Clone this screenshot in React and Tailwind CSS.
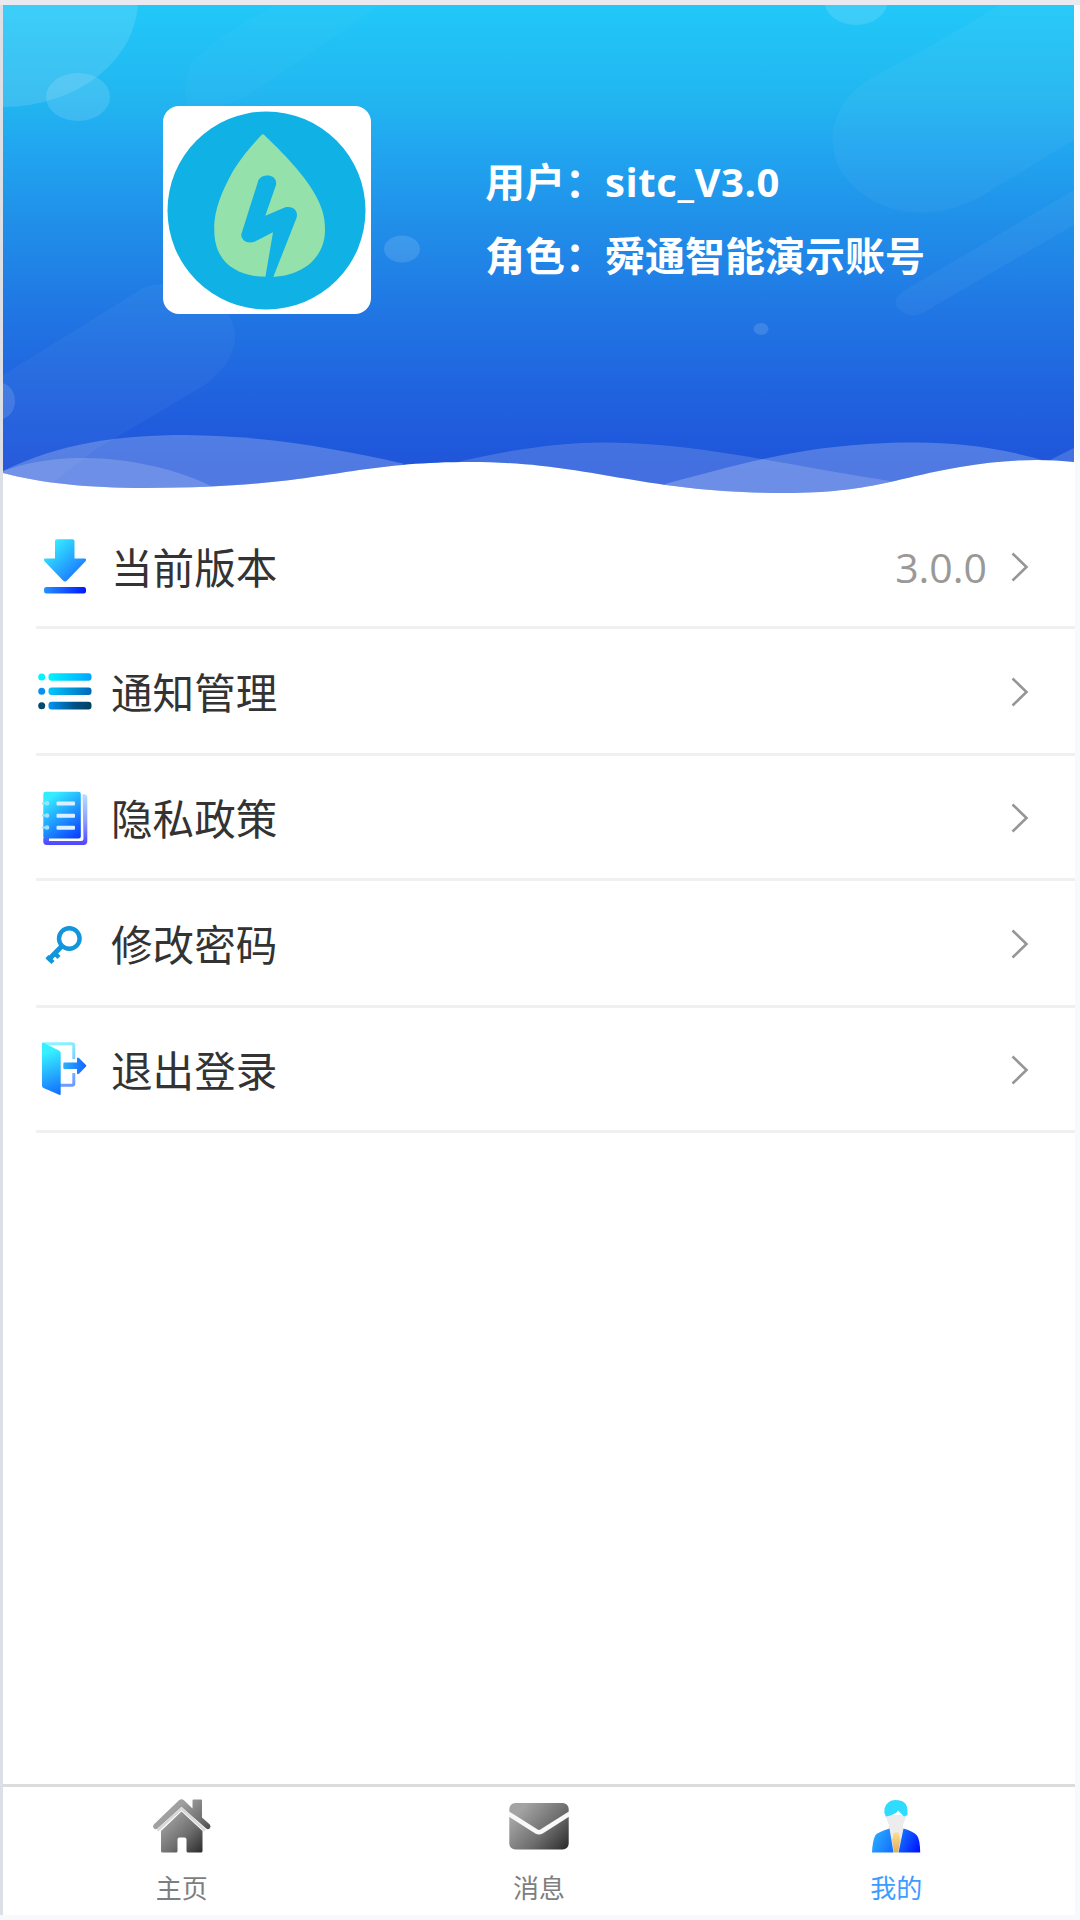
import React, { useState } from "react";

/* ================= ICONS ================= */
const DownloadIcon = () => (
  <svg width="54" height="56" viewBox="0 0 54 56">
    <defs>
      <linearGradient id="dl" x1="6" y1="0" x2="50" y2="46" gradientUnits="userSpaceOnUse">
        <stop offset="0.1" stopColor="#37f2ff" />
        <stop offset="0.75" stopColor="#1b7fff" />
        <stop offset="1" stopColor="#0a30ff" />
      </linearGradient>
      <linearGradient id="dlBar" x1="6" y1="0" x2="48" y2="0" gradientUnits="userSpaceOnUse">
        <stop stopColor="#2493ff" />
        <stop offset="1" stopColor="#0018ff" />
      </linearGradient>
    </defs>
    <path
      d="M19 .3h15.500a2 2 0 0 1 2 2V19.500H46.500q2.500 .4 1 2.700L29 41.500q-2 1.800-4 0L6.500 22.200q-1.500-2.300 1-2.700H17V2.300a2 2 0 0 1 2-2z"
      fill="url(#dl)"
    />
    <rect x="6" y="48" width="42" height="6.600" rx="2.500" fill="url(#dlBar)" />
  </svg>
);

const ListIcon = () => (
  <svg width="54" height="56" viewBox="0 0 54 56">
    <defs>
      <linearGradient id="l1">
        <stop stopColor="#00f5ff" />
        <stop offset="1" stopColor="#00a5ff" />
      </linearGradient>
      <linearGradient id="l2">
        <stop stopColor="#00c8ff" />
        <stop offset="1" stopColor="#0068b8" />
      </linearGradient>
      <linearGradient id="l3">
        <stop stopColor="#0095f5" />
        <stop offset="0.6" stopColor="#005288" />
        <stop offset="1" stopColor="#003f60" />
      </linearGradient>
    </defs>
    <circle cx="3.700" cy="13" r="3.500" fill="#00f5ff" />
    <circle cx="3.700" cy="27.300" r="3.500" fill="#0a92ea" />
    <circle cx="3.700" cy="41.700" r="3.500" fill="#03496e" />
    <rect x="10.500" y="9.200" width="43" height="7.600" rx="3" fill="url(#l1)" />
    <rect x="10.500" y="23.500" width="43" height="7.600" rx="3" fill="url(#l2)" />
    <rect x="10.500" y="37.800" width="43" height="7.600" rx="3" fill="url(#l3)" />
  </svg>
);

const PolicyIcon = () => (
  <svg width="54" height="56" viewBox="0 0 54 56">
    <defs>
      <linearGradient id="bk" x1="8" y1="3" x2="42" y2="50" gradientUnits="userSpaceOnUse">
        <stop offset="0.1" stopColor="#33edff" />
        <stop offset="0.95" stopColor="#0b3dff" />
      </linearGradient>
      <linearGradient id="bkBack" x1="40" y1="2" x2="40" y2="55" gradientUnits="userSpaceOnUse">
        <stop stopColor="#b9e6ff" />
        <stop offset="0.55" stopColor="#8f9cff" />
        <stop offset="1" stopColor="#4b45ff" />
      </linearGradient>
    </defs>
    <path
      d="M44.500 4q4.800 .3 4.800 3v44q0 4-4 4H9q-3.700 0-3.700-3.500V48H11V51H43q2.500 0 2.500-2.500z"
      fill="url(#bkBack)"
    />
    <path d="M7.500 1.700H40.500q2.300 0 2.300 2.300v42.500q0 2-2.300 2H7.500q-2.200 0-2.200-2V4q0-2.300 2.200-2.300z" fill="url(#bk)" />
    <g fill="#9fe2ff">
      <circle cx="9" cy="13.300" r="2.300" />
      <circle cx="9" cy="25.500" r="2.300" />
      <circle cx="9" cy="37.500" r="2.300" />
      <rect x="4" y="12.300" width="4" height="2" />
      <rect x="4" y="24.500" width="4" height="2" />
      <rect x="4" y="36.500" width="4" height="2" />
    </g>
    <g fill="#d8f0ff">
      <rect x="18.500" y="11.500" width="18.500" height="4" rx="1" />
      <rect x="18.500" y="23.700" width="18.500" height="4" rx="1" />
      <rect x="18.500" y="35.700" width="18.500" height="4" rx="1" />
    </g>
  </svg>
);

const KeyIcon = () => (
  <svg width="54" height="56" viewBox="0 0 54 56" fill="none" stroke="#1296db" strokeWidth="4.400">
    <circle cx="31.300" cy="22.500" r="10.300" />
    <path d="M24.500 29.500 9.800 44.500" strokeWidth="5" />
    <path d="M9 40.500l6 6" />
    <path d="M16 36.500l5 5" />
  </svg>
);

const LogoutIcon = () => (
  <svg width="54" height="56" viewBox="0 0 54 56">
    <defs>
      <linearGradient id="door" x1="4" y1="4" x2="22" y2="52" gradientUnits="userSpaceOnUse">
        <stop offset="0.15" stopColor="#36f0ff" />
        <stop offset="1" stopColor="#136dff" />
      </linearGradient>
      <linearGradient id="frame" x1="20" y1="0" x2="30" y2="45" gradientUnits="userSpaceOnUse">
        <stop stopColor="#8af6ff" />
        <stop offset="1" stopColor="#6f97ff" />
      </linearGradient>
      <linearGradient id="arr" x1="25" y1="0" x2="48" y2="0" gradientUnits="userSpaceOnUse">
        <stop stopColor="#2ab2ff" />
        <stop offset="1" stopColor="#1267ff" />
      </linearGradient>
    </defs>
    <path
      d="M6 1.800H34q1.800 0 1.800 1.800V17M35.800 31v10.500q0 1.800-1.800 1.800H22"
      fill="none"
      stroke="url(#frame)"
      strokeWidth="3"
    />
    <path d="M4 1.500Q4 .3 5.500 .7L21 8.500q1.700 1 1.700 2.500V52q0 1.500-1.500 .8L5.500 46Q4 45.200 4 43.500z" fill="url(#door)" />
    <path d="M26.500 20.500H39V16.500q.5-1.700 2-.5l7 7q.7 .8 0 1.600l-7 7.200q-1.500 1.200-2-.5V27H26.500q-1.200 0-1.200-1.200v-4q0-1.300 1.200-1.300z" fill="url(#arr)" />
  </svg>
);

const HomeIcon = () => (
  <svg width="60" height="56" viewBox="0 0 60 56">
    <defs>
      <linearGradient id="hm" x1="8" y1="8" x2="54" y2="54" gradientUnits="userSpaceOnUse">
        <stop offset="0.2" stopColor="#a0a0a0" />
        <stop offset="0.6" stopColor="#6e6e6e" />
        <stop offset="0.95" stopColor="#2f2f2f" />
      </linearGradient>
    </defs>
    <path
      d="M27 2.300q2.500-2 5 0L40.500 10.500V2.500q0-1 1-1h7.500q1 0 1 1V19.500L57.800 26.500q1.500 2 0 3.800-1.700 1.800-3.600 .3L29.500 9 5.500 30.600q-2 1.500-3.700-.3-1.600-1.800 0-3.800z"
      fill="url(#hm)"
    />
    <path d="M29.500 10.500 5.500 32.500M29.500 10.500 53 32.500" fill="none" stroke="#d9d9d9" strokeWidth="2.500" />
    <path
      d="M29.500 13.500 50.500 33V53q0 1.500-1.500 1.500H36q-1.500 0-1.500-1.500V41.500q0-2-2-2H27.500q-2 0-2 2V53q0 1.500-1.500 1.500H10.500Q9 54.500 9 53V33z"
      fill="url(#hm)"
    />
  </svg>
);

const MailIcon = () => (
  <svg width="60" height="56" viewBox="0 0 60 56">
    <defs>
      <linearGradient id="ml" x1="4" y1="4" x2="58" y2="54" gradientUnits="userSpaceOnUse">
        <stop offset="0.15" stopColor="#a3a3a3" />
        <stop offset="0.6" stopColor="#6c6c6c" />
        <stop offset="0.95" stopColor="#303030" />
      </linearGradient>
    </defs>
    <rect x=".3" y="5" width="59.400" height="46.500" rx="6" fill="url(#ml)" />
    <path d="M-1 15.500 27.500 33.500q2.500 1.500 5 0L61 15.500" fill="none" stroke="#f8f8f8" strokeWidth="4.500" />
  </svg>
);

const UserIcon = () => (
  <svg width="60" height="56" viewBox="0 0 60 56">
    <defs>
      <linearGradient id="suit" x1="8" y1="30" x2="54" y2="54" gradientUnits="userSpaceOnUse">
        <stop stopColor="#2bb2ff" />
        <stop offset="0.5" stopColor="#1572ff" />
        <stop offset="0.95" stopColor="#0018ff" />
      </linearGradient>
      <linearGradient id="tie" x1="0" y1="34" x2="0" y2="54" gradientUnits="userSpaceOnUse">
        <stop stopColor="#ffe08c" />
        <stop offset="1" stopColor="#e0ad60" />
      </linearGradient>
    </defs>
    <path d="M19 17h22l-4 10v5l-1 22H25l-2-22v-5z" fill="#ececee" />
    <path d="M28 34.500h4.500L34.500 42l-2.500 12.500h-4L26 42z" fill="url(#tie)" />
    <path
      d="M23.500 30.500 27.500 54.500H6q.5-12 3.500-17.500 2.500-3 14-6.500zM37.500 30.500q10 3 13.500 7 3 4 3.200 17H32.500z"
      fill="url(#suit)"
    />
    <path d="M29.500 2q12 0 12 11v4L38 18.500 32 12.500q-2 4-12 6-2.500-4-1.500-8Q21 2 29.500 2z" fill="#2fdcff" />
  </svg>
);

const Chevron = () => (
  <svg width="18" height="30" viewBox="0 0 18 30" fill="none" stroke="#969696" strokeWidth="2.600">
    <path d="M1.500 1.500 15.500 15 1.500 28.500" />
  </svg>
);

/* ================= LOGO ================= */
const Logo = () => (
  <svg width="208" height="208" viewBox="0 0 208 208">
    <circle cx="103.500" cy="104.500" r="99" fill="#10b2e5" />
    <path
      d="M101 28.800C118 45 143 70 154 92C160 104 162 112 162 124C162 152 139 171 106 171C73 171 51.300 156 51.300 124C51 109 55 92 70.600 64C80 49 90 38 98.500 29Q99.700 27.600 101 28.800z"
      fill="#95e1ac"
    />
    <path
      d="M95 75.500C97 67 115 67 113 79L102.300 109.700 122.300 101.300C129 99.500 136 104 133.500 112L109.500 173H102L110 126.300 92 135.500C83 139 76 132 79 126z"
      fill="#10b2e5"
    />
  </svg>
);

const HeaderBackground = () => (
  <svg
    className="absolute inset-0"
    width="1071"
    height="497"
    viewBox="3 5 1071 497"
  >
    <defs>
      <linearGradient id="sky" x1="0" y1="5" x2="0" y2="470" gradientUnits="userSpaceOnUse">
        <stop stopColor="#21c8f8" />
        <stop offset="0.2" stopColor="#22b6f0" />
        <stop offset="0.3" stopColor="#21a7f0" />
        <stop offset="0.47" stopColor="#208fe9" />
        <stop offset="0.68" stopColor="#2074e3" />
        <stop offset="0.85" stopColor="#2061de" />
        <stop offset="1" stopColor="#1f54da" />
      </linearGradient>
      <clipPath id="wave">
        <path d="M3 5H1074V462C1040 458 1000 460 960 467C900 477 870 493 785 493C640 493 590 462 470 462C345 462 320 488 145 488C90 488 40 483 3 473z" />
      </clipPath>
    </defs>
    <g clipPath="url(#wave)">
      <rect x="3" y="5" width="1071" height="497" fill="url(#sky)" />
      <g fill="#fff">
        {/* slanted capsules */}
        <path
          d="M275 5H380L260 88Q225 112 190 106Q180 90 190 65Q200 48 275 5z"
          fillOpacity="0.025"
        />
        <path
          d="M1000 5H1074V140L985 194C940 222 890 216 860 192C825 165 820 115 865 82C880 72 900 65 1000 5z"
          fillOpacity="0.04"
        />
        <path d="M1074 190V225L926 311Q910 321 899 309Q890 301 905 290z" fillOpacity="0.045" />
        <path
          d="M3 375L140 290C165 274 235 290 235 337Q235 362 205 385L95 450L30 500H3z"
          fillOpacity="0.04"
        />
        {/* bubbles */}
        <ellipse cx="3" cy="0" rx="135" ry="107" fillOpacity="0.12" />
        <ellipse cx="78" cy="97" rx="32" ry="24" fillOpacity="0.13" />
        <ellipse cx="856" cy="0" rx="32" ry="25" fillOpacity="0.12" />
        <ellipse cx="402" cy="249" rx="18" ry="13.500" fillOpacity="0.13" />
        <ellipse cx="761" cy="329" rx="7.500" ry="6" fillOpacity="0.13" />
        <ellipse cx="0" cy="401" rx="15" ry="18" fillOpacity="0.13" />
        {/* waves */}
        <path d="M3 471C60 443 120 435 185 435C270 436 335 449 403 463.500V500H3z" fillOpacity="0.22" />
        <path d="M3 471C35 460 60 458 85 458C130 458 180 470 215 488V500H3z" fillOpacity="0.17" />
        <path d="M450 464C505 450 560 442.500 605 442.500C700 443 790 466 890 481V500H450z" fillOpacity="0.16" />
        <path d="M665 484C745 463 810 442.500 915 442.500C960 442.500 1000 448 1046 461L1030 500H665z" fillOpacity="0.22" />
        <path d="M1048 461L1074 448V470H1048z" fillOpacity="0.16" />
      </g>
    </g>
  </svg>
);

const menu = [
  { label: "当前版本", icon: DownloadIcon, value: "3.0.0", height: "h-[123px]" },
  { label: "通知管理", icon: ListIcon, height: "h-[127px]" },
  { label: "隐私政策", icon: PolicyIcon, height: "h-[125px]" },
  { label: "修改密码", icon: KeyIcon, height: "h-[127px]" },
  { label: "退出登录", icon: LogoutIcon, height: "h-[125px]" },
];

const tabs = [
  { label: "主页", icon: HomeIcon },
  { label: "消息", icon: MailIcon },
  { label: "我的", icon: UserIcon },
];

const App = () => {
  const [active, setActive] = useState("我的");

  return (
    <div className="w-[1080px] h-[1920px] overflow-hidden bg-[#f8f9fd] border-t-[5px] border-t-[#e9e9ef] font-['Open_Sans','Noto_Sans_CJK_SC',sans-serif]">
      <div className="w-[1075px] h-[1910px] flex flex-col bg-white border-l-[3px] border-[#dcdfe6]">

        {/* ================= HEADER ================= */}
        <header className="relative h-[501px] shrink-0">
          <HeaderBackground />
          <div className="relative flex pt-[101px] pl-40">
            <div className="w-52 h-52 rounded-2xl bg-white overflow-hidden">
              <Logo />
            </div>
            <div className="ml-[114px] pt-[39px] text-[40px] leading-[74px] font-bold text-white whitespace-nowrap">
              <p>
                用户：<span className="tracking-[0.6px]">sitc_V3.0</span>
              </p>
              <p>角色：舜通智能演示账号</p>
            </div>
          </div>
        </header>

        {/* ================= MENU ================= */}
        <main className="flex-1 pl-[33px]">
          {menu.map(({ label, icon: Icon, value, height }) => (
            <div
              key={label}
              className={`${height} flex items-center pt-0.5 pl-0.5 pr-[46px] border-b-[3px] border-[#f0f0f0]`}
            >
              <Icon />
              <span className="ml-[19px] pt-[3px] text-[41.600px] leading-none text-[#333]">{label}</span>
              <span className="ml-auto mr-6 text-[41px] leading-none text-[#999]">{value}</span>
              <Chevron />
            </div>
          ))}
        </main>

        {/* ================= TAB BAR ================= */}
        <nav className="h-[131px] shrink-0 grid grid-cols-3 border-t-[3px] border-[#dcdcdc]">
          {tabs.map(({ label, icon: Icon }) => (
            <button
              key={label}
              onClick={() => setActive(label)}
              className="flex flex-col items-center pt-[11px]"
            >
              <Icon />
              <span
                className={`mt-[21px] text-[26px] leading-none ${
                  active === label ? "text-[#3c9cff]" : "text-[#7d7e80]"
                }`}
              >
                {label}
              </span>
            </button>
          ))}
        </nav>
      </div>
    </div>
  );
};

export default App;
